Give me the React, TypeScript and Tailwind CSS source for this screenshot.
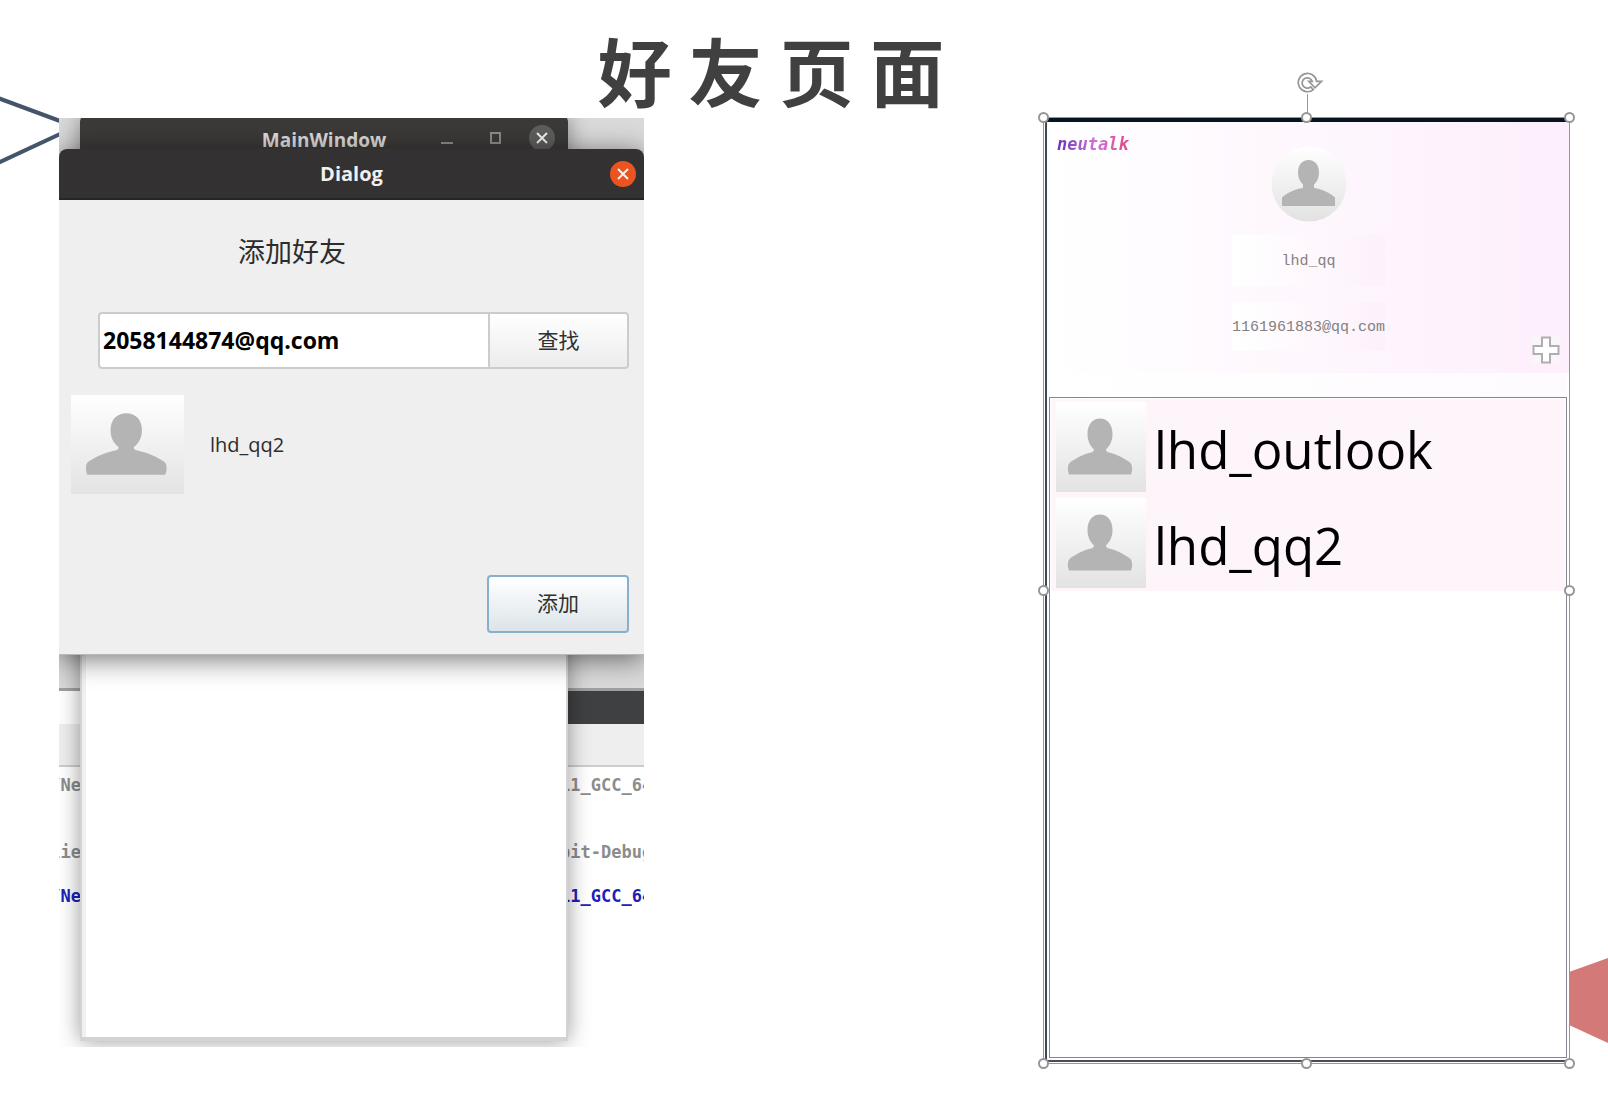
import React from "react";

const UI = "font-['Open_Sans','Noto_Sans_CJK_SC',sans-serif]";

function Avatar({ id, className }: { id: string; className: string }) {
  return (
    <svg viewBox="0 0 90 90" preserveAspectRatio="none" className={className} role="img" aria-label="avatar">
      <defs>
        <linearGradient id={id} x1="0" y1="0" x2="0" y2="1">
          <stop offset="0" stopColor="#ffffff" />
          <stop offset="1" stopColor="#e3e3e3" />
        </linearGradient>
      </defs>
      <rect width="90" height="90" fill={`url(#${id})`} />
      <path
        fill="#b4b4b4"
        d="M44 16.500C51.500 16.500 56.500 22.500 56.500 32C56.500 38.500 54 44 50.300 47C49.500 49 51 50 53 50.500C61 52.500 69 56.500 74.500 61C76.500 63 76.700 69 75 72.500H13C11.500 69 11.500 63 13.500 61C19 56.500 27 52.500 35 50.500C37 50 38.500 49 37.700 47C34 44 31.500 38.500 31.500 32C31.500 22.500 36.500 16.500 44 16.500Z"
      />
    </svg>
  );
}

function Cross() {
  return (
    <svg viewBox="0 0 26 26" className="size-full" fill="none" stroke="#f2f2f2" strokeWidth="2" aria-hidden="true">
      <path d="M8 8L18 18M18 8L8 18" />
    </svg>
  );
}

const logLines = [
  { left: "/Ne", right: "11_GCC_64-bit", className: "mt-1.5 text-[#8c8c8c]" },
  { left: "lie", right: "bit-Debug/", className: "mt-[43px] text-[#8c8c8c]" },
  { left: "/Ne", right: "11_GCC_64-bit", className: "mt-5 text-[#2020b8]" },
];

function Desktop() {
  return (
    <div className="absolute inset-0 flex flex-col bg-white">
      <div className="h-[570px] bg-[#dadada]" />
      <div className="flex h-9 border-t-3 border-[#a0a0a0]">
        <div className="flex-1 bg-white" />
        <div className="flex-1 bg-[#3e4042]" />
      </div>
      <div className="h-[43px] border-b-2 border-[#cccccc] bg-[#eeeeee]" />
      {logLines.map((line, i) => (
        <div
          key={i}
          className={`flex h-6 justify-between overflow-hidden font-['DejaVu_Sans_Mono',monospace] text-[17px] leading-6 font-bold ${line.className}`}
        >
          <span className="flex w-[22px] justify-end">{line.left}</span>
          <span className="w-[84px] overflow-hidden whitespace-nowrap">{line.right}</span>
        </div>
      ))}
    </div>
  );
}

function MainWindow() {
  return (
    <div className="absolute -top-1 right-[76px] bottom-1.5 left-[21px] flex flex-col rounded-t-lg border-x-2 border-b-4 border-[#d4d2d4] bg-white shadow-[0_0_22px_rgba(0,0,0,0.4)]">
      <div className="relative -mx-0.5 flex h-10 items-center justify-end gap-5 rounded-t-lg bg-[#3c3a38] pt-2 pr-[13px]">
        <span className="absolute inset-x-0 top-3 text-center text-[19px] leading-7 font-bold text-[#dcdcdc]">MainWindow</span>
        <button aria-label="Minimize" className="relative flex size-7 items-end justify-center pb-2">
          <span className="h-0.5 w-3 bg-[#8c8c8a]" />
        </button>
        <button aria-label="Maximize" className="relative flex size-7 items-center justify-center">
          <span className="h-3 w-[11px] border-2 border-[#8c8c8a]" />
        </button>
        <button aria-label="Close" className="relative size-[26px] rounded-full bg-[#5e5e5d]">
          <Cross />
        </button>
      </div>
      <div className="w-1 flex-1 bg-[#f0f0f0]" />
    </div>
  );
}

function Dialog() {
  return (
    <section className="relative flex h-[506px] flex-col rounded-t-lg border-b border-[#b8b8b8] bg-[#efefef] shadow-[0_4px_28px_rgba(0,0,0,0.55)]">
      <header className="relative flex h-[51px] items-center justify-end rounded-t-lg border-b-2 border-[#262424] bg-[#333132] pr-2">
        <h2 className="absolute inset-x-0 text-center text-[20px] leading-7 font-bold text-[#f0f0f0]">Dialog</h2>
        <button aria-label="Close dialog" className="relative size-[26px] rounded-full bg-[#e95420]">
          <Cross />
        </button>
      </header>
      <form className="flex flex-1 flex-col pr-[15px] pb-[21px]" onSubmit={(e) => e.preventDefault()}>
        <label htmlFor="friend" className="mt-8 pl-[179px] text-[27px] leading-10 text-[#2c2c2c]">
          添加好友
        </label>
        <div className="mt-10 ml-[39px] flex h-[57px]">
          <input
            id="friend"
            defaultValue="2058144874@qq.com"
            className="min-w-0 flex-1 rounded-l-[4px] border-2 border-r-0 border-[#cccccc] bg-white px-[3px] text-[23px] font-bold text-black outline-none"
          />
          <button type="button" className="w-[141px] rounded-r-[4px] border-2 border-[#cccccc] bg-linear-to-b from-white to-[#ececec] text-[21px] text-[#303030]">
            查找
          </button>
        </div>
        <div className="mt-[26px] ml-3 flex items-center gap-[26px]">
          <Avatar id="found" className="h-[99px] w-[113px]" />
          <span className="text-[20px] leading-7 text-[#2c2c2c]">lhd_qq2</span>
        </div>
        <button type="button" className="mt-auto h-[58px] w-[142px] self-end rounded-[4px] border-2 border-[#86b0cb] bg-linear-to-b from-white to-[#dce4e9] text-[21px] text-[#303030]">
          添加
        </button>
      </form>
    </section>
  );
}

const handles = [
  "-top-1.5 -left-1.5",
  "-top-1.5 left-1/2 -ml-1.5",
  "-top-1.5 -right-1.5",
  "top-1/2 -left-1.5 -mt-1.5",
  "top-1/2 -right-1.5 -mt-1.5",
  "-bottom-1.5 -left-1.5",
  "-bottom-1.5 left-1/2 -ml-1.5",
  "-bottom-1.5 -right-1.5",
];

function SelectionFrame() {
  return (
    <div className="pointer-events-none absolute inset-0 border border-[#969696]">
      <div className="absolute -top-6 left-1/2 h-6 w-px bg-[#969696]" />
      <svg viewBox="0 0 28 24" className="absolute -top-[47px] left-1/2 -ml-[10px] h-6 w-7" fill="none" stroke="#969696" aria-hidden="true">
        <path d="M16.400 18.600A9.200 9.200 0 1 1 19.600 10.300L24.500 10.300L18 16.800L11.800 10.300L15.300 10.300A5.200 5.200 0 1 0 13.700 16Z" fill="white" strokeWidth="1.700" />
      </svg>
      {handles.map((place) => (
        <span key={place} className={`absolute size-[11px] rounded-full border-2 border-[#969696] bg-white ${place}`} />
      ))}
    </div>
  );
}

function ChatWindow() {
  return (
    <figure className="relative flex h-[947px] w-[527px] shrink-0 flex-col">
      <div className="mb-0.5 ml-0.5 flex flex-1 flex-col border-t-5 border-b-2 border-l-2 border-t-[#07131e] border-b-[#4a4c58] border-l-[#3e4852] bg-white pr-[3px]">
        <div className="-mr-[3px] flex h-[251px] flex-col items-center bg-linear-to-r from-white to-[#fdeffc]">
          <div className="flex h-5 w-full items-start pt-2.5 pl-[10px]">
            <span className="bg-linear-to-r from-[#6a32b4] via-[#cf70da] to-[#e0407a] bg-clip-text pr-1 font-['DejaVu_Sans_Mono',monospace] text-[17px] leading-6 font-bold text-transparent italic">
              neutalk
            </span>
          </div>
          <svg viewBox="0 0 76 76" className="mt-1 size-[76px] shrink-0" role="img" aria-label="avatar">
            <defs>
              <linearGradient id="profile" x1="0" y1="0" x2="0" y2="1">
                <stop offset="0" stopColor="#ffffff" />
                <stop offset="1" stopColor="#e2e2e2" />
              </linearGradient>
            </defs>
            <circle cx="38" cy="38" r="37.500" fill="url(#profile)" />
            <path
              fill="#b4b4b4"
              d="M37.500 14C44 14 48 19 48 26.500C48 31.500 46 36 43 38.500V42C51 43 59 47 64 51.500V60H11V51.500C16 47 24 43 32 42V38.500C29 36 27 31.500 27 26.500C27 19 31 14 37.500 14Z"
            />
          </svg>
          <div className="mt-[13px] flex h-[51px] w-[153px] shrink-0 items-center justify-center bg-linear-to-r from-white to-[#fdf1fc] pt-1 font-['Liberation_Mono',monospace] text-[15px] text-[#85807d]">
            lhd_qq
          </div>
          <div className="relative flex w-full shrink-0 items-start justify-center pt-4">
            <div className="flex h-[49px] w-[153px] items-center justify-center bg-linear-to-r from-white to-[#fdf1fc] pt-1 font-['Liberation_Mono',monospace] text-[15px] text-[#85807d]">
              1161961883@qq.com
            </div>
            <button aria-label="Add friend" className="absolute right-[10px] -bottom-[13px] size-7 bg-[#f9f5f9]">
              <svg viewBox="0 0 28 28" className="size-full" fill="white" stroke="#b0acb0" strokeWidth="2" aria-hidden="true">
                <path d="M10 1.500H18V10H26.500V18H18V26.500H10V18H1.500V10H10Z" />
              </svg>
            </button>
          </div>
        </div>
        <div className="h-6 bg-linear-to-r from-white to-[#fefbfe]" />
        <ul className="mb-0.5 ml-0.5 flex-1 border border-[#82868f] bg-white p-px">
          {["lhd_outlook", "lhd_qq2"].map((name) => (
            <li key={name} className="flex h-[96px] items-center gap-2 bg-[#fef5fb] pl-[5px]">
              <Avatar id={`friend-${name}`} className="size-[90px]" />
              <span className="pt-1 text-[51px] leading-[72px] text-black">{name}</span>
            </li>
          ))}
        </ul>
      </div>
      <SelectionFrame />
    </figure>
  );
}

export default function App() {
  return (
    <main className={`relative min-h-screen overflow-hidden bg-white ${UI}`}>
      <svg className="absolute top-[90px] left-0 h-20 w-[60px]" viewBox="0 0 60 80" fill="none" stroke="#44546a" strokeWidth="4" aria-hidden="true">
        <path d="M-2 8L60 31M-2 73L60 44" />
      </svg>
      <svg className="absolute top-[950px] right-0 h-[100px] w-[39px]" viewBox="0 0 39 100" fill="#d37a79" aria-hidden="true">
        <path d="M0 22L39 8V93L0 75Z" />
      </svg>
      <header className="flex h-[117px] items-center justify-center pt-5 pr-[66px]">
        <h1 className="font-['Noto_Sans_CJK_SC',sans-serif] text-[74px] leading-[100px] font-bold text-[#404040]">好 友 页 面</h1>
      </header>
      <div className="relative flex items-start justify-between pr-[38px] pl-[59px]">
        <figure className="relative mt-px w-[585px] shrink-0 overflow-hidden pt-[31px] pb-[392px]">
          <Desktop />
          <MainWindow />
          <Dialog />
        </figure>
        <ChatWindow />
      </div>
    </main>
  );
}
